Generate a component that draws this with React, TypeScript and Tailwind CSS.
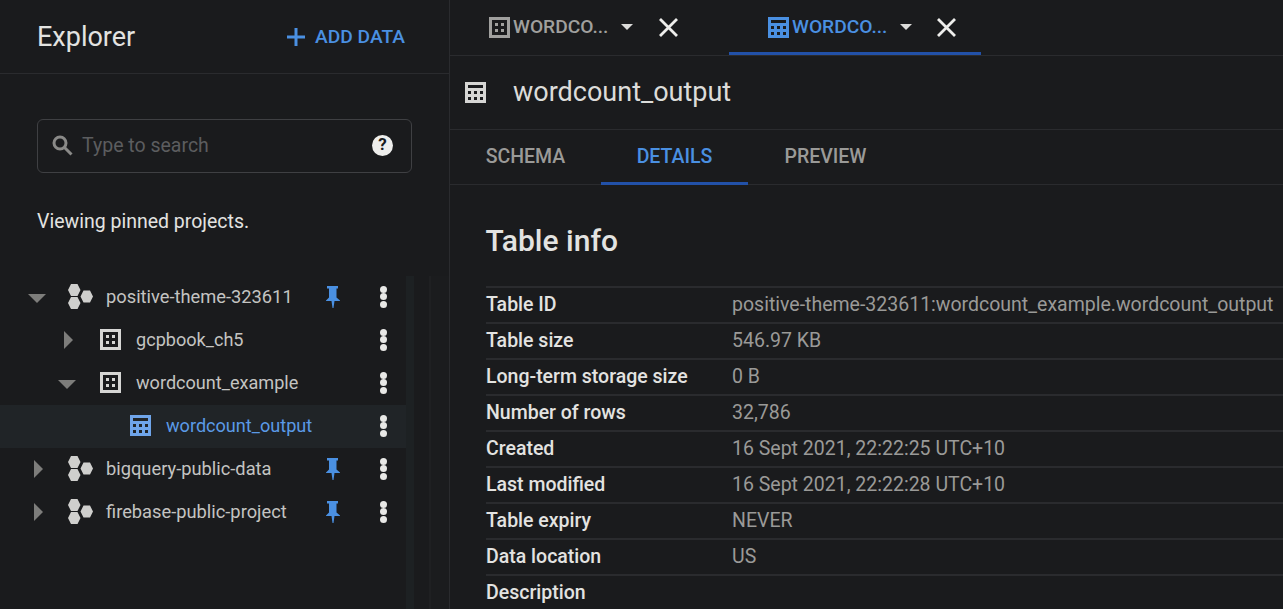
const rows = [
  ["Table ID", "positive-theme-323611:wordcount_example.wordcount_output"],
  ["Table size", "546.97 KB"],
  ["Long-term storage size", "0 B"],
  ["Number of rows", "32,786"],
  ["Created", "16 Sept 2021, 22:22:25 UTC+10"],
  ["Last modified", "16 Sept 2021, 22:22:28 UTC+10"],
  ["Table expiry", "NEVER"],
  ["Data location", "US"],
  ["Description", ""],
];

function DatasetIcon({ className }: { className: string }) {
  return (
    <svg viewBox="0 0 21 21" className={className} fill="currentColor">
      <path fillRule="evenodd" d="M0 0h21v21H0zM3 3v15h15V3z" />
      <path d="M6 6h3v3H6zM12 6h3v3h-3zM6 12h3v3H6zM12 12h3v3h-3z" />
    </svg>
  );
}

function TableIcon({ className }: { className: string }) {
  return (
    <svg viewBox="0 0 21 21" className={className} fill="currentColor">
      <path
        fillRule="evenodd"
        d="M0 0h21v21H0zM3 3v3h15V3zM3 9v3h3V9zM9 9v3h3V9zM15 9v3h3V9zM3 15v3h3v-3zM9 15v3h3v-3zM15 15v3h3v-3z"
      />
    </svg>
  );
}

function ProjectIcon() {
  return (
    <svg viewBox="0 0 25 25" className="h-[25px] w-[25px] text-[#cfcfcd]" fill="currentColor">
      <path d="M3 0h6.500L12.500 6 9.500 12H3L0 6zM3 13h6.500l3 6-3 6H3l-3-6zM15.500 6.500H22l3 6-3 6h-6.500l-3-6z" />
    </svg>
  );
}

function PinIcon() {
  return (
    <svg viewBox="0 0 14 22" className="h-[22px] w-[14px] text-[#4a90e2]" fill="currentColor">
      <path d="M1 0h11v2.500H10.500V11.500L14 14.500V15H8.500L7.500 22H6.500L5.500 15H0V14.500L3 11.500V2.500H1z" />
    </svg>
  );
}

function Dots() {
  return (
    <div className="flex flex-col gap-[0.5px]">
      <div className="h-[7px] w-[7px] rounded-full bg-[#e8e8e6]" />
      <div className="h-[7px] w-[7px] rounded-full bg-[#e8e8e6]" />
      <div className="h-[7px] w-[7px] rounded-full bg-[#e8e8e6]" />
    </div>
  );
}

function ArrowDown() {
  return <div className="mt-[3px] h-0 w-0 border-x-[9px] border-t-[9px] border-x-transparent border-t-[#7d7d7b]" />;
}

function ArrowRight() {
  return <div className="h-0 w-0 border-y-[9px] border-l-[9px] border-y-transparent border-l-[#7d7d7b]" />;
}

function CloseIcon() {
  return (
    <svg viewBox="0 0 19 19" className="h-[19px] w-[19px] text-[#eeeeec]" stroke="currentColor" strokeWidth="2.800">
      <path d="M1 1l17 17M18 1L1 18" />
    </svg>
  );
}

function Caret() {
  return <div className="h-0 w-0 border-x-[6px] border-t-[6px] border-x-transparent border-t-[#dcdcda]" />;
}

function ProjectRow({ name, open }: { name: string; open?: boolean }) {
  return (
    <div className="flex h-[43px] items-center pb-[2px] pl-[28px] pr-[19px]">
      <div className="flex w-[40px] items-center">{open ? <ArrowDown /> : <div className="pl-[6px]"><ArrowRight /></div>}</div>
      <ProjectIcon />
      <span className="ml-[13px] flex-1 text-[18.3px] text-[#c4c4c2]">{name}</span>
      <PinIcon />
      <div className="ml-[40px]">
        <Dots />
      </div>
    </div>
  );
}

function DatasetRow({ name, open }: { name: string; open?: boolean }) {
  return (
    <div className="flex h-[43px] items-center pb-[2px] pl-[58px] pr-[19px]">
      <div className="flex w-[42px] items-center">{open ? <ArrowDown /> : <div className="pl-[6px]"><ArrowRight /></div>}</div>
      <DatasetIcon className="h-[21px] w-[21px] text-[#d6d6d4]" />
      <span className="ml-[15px] flex-1 text-[18.1px] text-[#c4c4c2]">{name}</span>
      <Dots />
    </div>
  );
}

export default function App() {
  return (
    <div className="flex h-[609px] w-[1283px] overflow-hidden bg-[#1a1b1d] font-['Roboto',sans-serif]">
      {/* Explorer */}
      <div className="flex w-[450px] shrink-0 flex-col border-r border-[#2a2b2e]">
        <div className="flex h-[74px] shrink-0 items-center justify-between border-b border-[#2a2b2e] pl-[37px] pr-[44px] pt-[2px]">
          <span className="text-[27px] text-[#e3e3e1]">Explorer</span>
          <div className="flex items-center gap-[10px] text-[#4a90e2]">
            <svg viewBox="0 0 18 18" className="h-[18px] w-[18px]" fill="currentColor">
              <path d="M7.500 0h3v7.500H18v3h-7.500V18h-3v-7.500H0v-3h7.500z" />
            </svg>
            <span className="text-[19.2px] font-medium">ADD DATA</span>
          </div>
        </div>

        <div className="mx-[37px] mt-[45px] flex h-[54px] items-center rounded-[6px] border border-[#3f4043] pb-[2px] pl-[14px] pr-[18px]">
          <svg viewBox="0 0 21 21" className="h-[21px] w-[21px] text-[#8a8a88]" fill="none" stroke="currentColor" strokeWidth="3">
            <circle cx="8" cy="8" r="6" />
            <path d="M12.500 12.500l7 7" />
          </svg>
          <span className="ml-[9px] mt-[2px] flex-1 text-[19.5px] text-[#5c5d5f]">Type to search</span>
          <div className="flex h-[21px] w-[21px] items-center justify-center rounded-full bg-[#eeeeec] text-[17px] font-bold text-[#1a1b1d]">?</div>
        </div>

        <div className="ml-[37px] mt-[37px] text-[19.5px] leading-[24px] text-[#e3e3e1]">Viewing pinned projects.</div>

        <div className="relative mt-[42px] flex-1">
          {/* scroll gutter */}
          <div className="absolute bottom-0 right-0 top-0 flex w-[43px]">
            <div className="w-[8px] bg-[#1d2123]" />
            <div className="w-[15px] bg-[#1a1b1d]" />
            <div className="w-[2px] bg-[#1f2022]" />
            <div className="flex-1 bg-[#1b1c1e]" />
          </div>
          <div className="w-[406px]">
            <ProjectRow name="positive-theme-323611" open />
            <DatasetRow name="gcpbook_ch5" />
            <DatasetRow name="wordcount_example" open />
            <div className="flex h-[43px] items-center bg-[#202427] pb-[2px] pl-[130px] pr-[19px]">
              <TableIcon className="h-[21px] w-[21px] text-[#6fa5ea]" />
              <span className="ml-[15px] flex-1 text-[18.1px] text-[#5b9ae6]">wordcount_output</span>
              <Dots />
            </div>
            <ProjectRow name="bigquery-public-data" />
            <ProjectRow name="firebase-public-project" />
          </div>
        </div>
      </div>

      {/* Table panel */}
      <div className="flex min-w-0 flex-1 flex-col">
        <div className="flex h-[56px] shrink-0 border-b border-[#2a2b2e]">
          <div className="flex w-[279px] items-center pb-[1px] pl-[39px]">
            <DatasetIcon className="h-[21px] w-[21px] text-[#a0a09e]" />
            <span className="ml-[3px] w-[108px] text-[19.2px] font-medium text-[#a0a09e]">WORDCO...</span>
            <Caret />
            <div className="ml-[26px]"><CloseIcon /></div>
          </div>
          <div className="flex h-[55px] w-[252px] items-center border-b-[3px] border-[#2251a8] pl-[39px] pt-[2px]">
            <TableIcon className="h-[21px] w-[21px] text-[#4a90e2]" />
            <span className="ml-[3px] w-[108px] text-[19.2px] font-medium text-[#4a90e2]">WORDCO...</span>
            <Caret />
            <div className="ml-[25px]"><CloseIcon /></div>
          </div>
        </div>

        <div className="flex h-[74px] shrink-0 items-center border-b border-[#2a2b2e] pl-[15px]">
          <TableIcon className="h-[21px] w-[21px] text-[#d6d6d4]" />
          <span className="ml-[27px] text-[27px] text-[#dcdcda]">wordcount_output</span>
        </div>

        <div className="flex h-[55px] shrink-0 border-b border-[#2a2b2e] text-[19.5px] font-medium">
          <div className="flex w-[151px] items-center justify-center text-[#9a9a98]">SCHEMA</div>
          <div className="flex h-[55px] w-[147px] items-center justify-center border-b-[3px] border-[#2251a8] pt-[2px] text-[#4a90e2]">DETAILS</div>
          <div className="flex w-[155px] items-center justify-center text-[#9a9a98]">PREVIEW</div>
        </div>

        <div className="pl-[36px]">
          <h2 className="-ml-[0.5px] mt-[38px] text-[30px] font-medium leading-[36px] text-[#e3e3e1]">Table info</h2>
          <div className="mt-[27px]">
            {rows.map(([label, value]) => (
              <div key={label} className="flex h-[36px] items-center border-t-2 border-[#2a2b2e] text-[19.5px] leading-[24px]">
                <span className="w-[246px] shrink-0 font-medium text-[#e3e3e1]">{label}</span>
                <span className="whitespace-nowrap text-[#9a9a98]">{value}</span>
              </div>
            ))}
          </div>
        </div>
      </div>
    </div>
  );
}
